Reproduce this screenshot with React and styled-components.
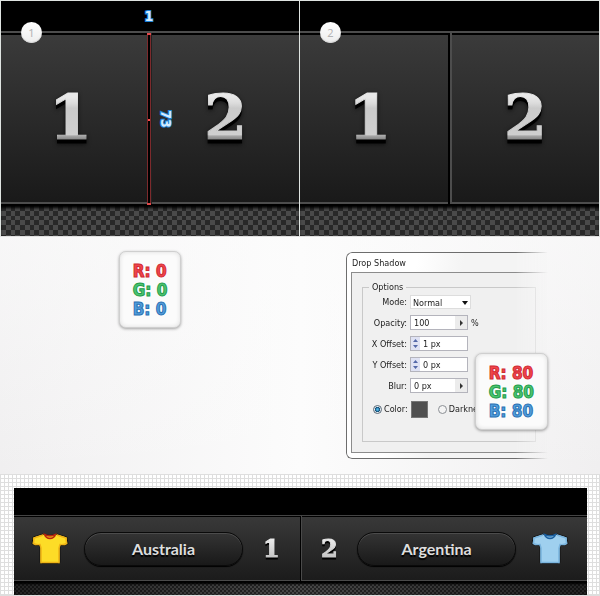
import React from "react";
import styled, { createGlobalStyle } from "styled-components";

const GlobalStyle = createGlobalStyle`
  * {
    box-sizing: border-box;
  }

  body {
    margin: 0;
    background: #fbfbfb;
    font-family: "Noto Sans", "Open Sans", sans-serif;
  }
`;

const Page = styled.main`
  display: flex;
  flex-direction: column;
`;

/* ---------- zoomed panels ---------- */

const Panels = styled.section`
  display: grid;
  grid-template-columns: 1fr 1fr;
  border-top: 1px solid #dfe4e1;
`;

const Panel = styled.article`
  position: relative;
  background: #000;
  border-right: 1px solid #dfe4e1;

  &:first-child {
    border-left: 1px solid #dfe4e1;
  }
`;

const StepBadge = styled.span`
  position: absolute;
  top: 21px;
  left: 20px;
  width: 21px;
  height: 21px;
  border-radius: 50%;
  background: linear-gradient(#fff, #ededed);
  box-shadow: inset 0 -1px 1px #d4d4d4;
  color: #b4b4b4;
  font-size: 11px;
  line-height: 21px;
  text-align: center;
`;

const Cells = styled.div`
  display: grid;
  grid-template-columns: 1fr 1fr;
  margin-top: 30px;
  border-top: 2px solid #4d4d4d;
  border-bottom: 2px solid #000;
`;

const Cell = styled.div`
  padding: 54px 0 55px;
  background: linear-gradient(#3b3b3b, #191919);
  box-shadow: inset 0 2px #000, inset 0 -2px #4d4d4d;

  &:first-child {
    padding-right: 8px;
    border-right: 2px solid #000;
  }

  &:last-child {
    border-left: 2px solid ${(props) => (props.$lit ? "#4d4d4d" : "#222")};
  }
`;

const Score = styled.div`
  font-family: "DejaVu Serif", serif;
  font-weight: bold;
  font-size: 62px;
  line-height: 1;
  text-align: center;
  color: transparent;
  -webkit-text-stroke: 1px transparent;
  background: linear-gradient(
    #e8e8e8 16%,
    #dcdcdc 26%,
    #cacaca 34%,
    #cfcfcf 77%,
    #a6a6a6 79%,
    #6c6c6c 89%
  );
  background-clip: text;
  filter: drop-shadow(0 4px 0 #000) drop-shadow(0 1px 2px rgba(0, 0, 0, 0.6));
`;

const SmallScore = styled(Score)`
  flex: 1;
  font-size: 24px;
  background: linear-gradient(#f0f0f0, #bdbdbd);
  background-clip: text;
  filter: drop-shadow(0 2px 0 #000);
`;

const Checker = styled.div`
  height: 30px;
  background-color: #282828;
  background-image: linear-gradient(
      90deg,
      #727272 5px,
      #000 5px 10px,
      #727272 10px 14px,
      #000 14px
    ),
    linear-gradient(#727272 5px, #000 5px 10px, #727272 10px 14px, #000 14px);
  background-size: 19px 19px;
  background-blend-mode: difference;
  box-shadow: inset 0 3px 3px -1px #000;
`;

const Measure = styled.div`
  position: absolute;
  top: 33px;
  bottom: 32px;
  left: calc(50% - 3px);
  width: 4px;
  border: solid #7d2a2c;
  border-width: 0 1px;

  &::before,
  &::after {
    content: "";
    position: absolute;
    left: -1px;
    width: 4px;
    height: 2px;
    background: #e2484a;
  }

  &::before {
    top: -1px;
  }

  &::after {
    bottom: -1px;
  }
`;

const MeasureDot = styled.i`
  position: absolute;
  top: 50%;
  left: 0;
  width: 2px;
  height: 2px;
  background: #ff4a4a;
`;

const Dimension = styled.span`
  position: absolute;
  color: #d5ebff;
  font-family: "DejaVu Sans Condensed", "DejaVu Sans", sans-serif;
  font-size: 14px;
  line-height: 18px;
  font-weight: bold;
  -webkit-text-stroke: 2px #1f83d8;
  paint-order: stroke fill;
`;

const WidthLabel = styled(Dimension)`
  top: 6px;
  left: calc(50% - 1px);
  transform: translateX(-50%);
`;

const HeightLabel = styled(Dimension)`
  top: 50%;
  left: calc(50% + 7px);
  transform: translateY(-50%);
  writing-mode: vertical-rl;
`;

/* ---------- settings ---------- */

const Settings = styled.section`
  display: grid;
  grid-template-columns: 1fr 1fr;
  padding: 14px 0 15px;
  border-top: 1px solid #e2e2e2;
  background: linear-gradient(rgba(252, 252, 252, 0.6), rgba(252, 252, 252, 0)),
    linear-gradient(90deg, #f0eff0, #fcfcfc 50%, #f0eff0);
`;

const Swatch = styled.div`
  padding: 10px 13px 8px;
  border: 1px solid #cfcfcf;
  border-radius: 7px;
  background: #fbfbfb;
  box-shadow: 0 1px 3px rgba(0, 0, 0, 0.35), inset 0 0 4px #ddd;
  font-family: "DejaVu Sans Condensed", "DejaVu Sans", sans-serif;
  font-size: 17px;
  line-height: 19px;
  font-weight: bold;
`;

const Channel = styled.div`
  white-space: nowrap;
  color: ${(props) => props.$fill};
  -webkit-text-stroke: 1px ${(props) => props.$edge};
`;

const LeftColumn = styled.div`
  display: flex;
  justify-content: center;
  align-items: flex-start;
`;

const RightColumn = styled.div`
  position: relative;
  padding: 1px 52px 0 46px;
`;

const Floating = styled.div`
  position: absolute;
  top: 102px;
  right: 52px;
`;

const Dialog = styled.form`
  padding: 0 0 5px 4px;
  border: 1px solid #6d6d6d;
  border-right: 0;
  border-radius: 6px 0 0 6px;
  background: linear-gradient(100deg, #fff 30%, #f4f4f4 50%);
  box-shadow: -1px 1px 3px rgba(0, 0, 0, 0.2);
  color: #222;
  font-family: "DejaVu Sans Condensed", "DejaVu Sans", sans-serif;
  font-size: 9px;
  line-height: 14px;
  mask-image: linear-gradient(90deg, #000 84%, transparent);
`;

const DialogTitle = styled.h2`
  margin: 0;
  padding: 3px 0 2px 1px;
  font-size: 9px;
  line-height: 14px;
  font-weight: normal;
`;

const DialogBody = styled.div`
  padding: 7px 12px 10px 10px;
  border: 1px solid #8c8c8c;
  border-right: 0;
  background: #f0f0f0;
`;

const Options = styled.fieldset`
  display: flex;
  flex-direction: column;
  gap: 6px;
  min-width: 0;
  margin: 0;
  padding: 0 0 23px;
  border: 1px solid #c9c9c9;

  legend {
    margin-left: 6px;
    padding: 0 3px;
  }
`;

const Row = styled.div`
  display: grid;
  grid-template-columns: 44px auto 1fr;
  column-gap: 3px;
  align-items: center;
  height: 15px;

  > label:first-child {
    text-align: right;
    white-space: nowrap;
  }
`;

const Select = styled.select`
  width: 61px;
  height: 14px;
  padding: 0 2px;
  border: 1px solid #ddd;
  border-radius: 0;
  appearance: none;
  background: #fff;
  font: inherit;
  color: inherit;
`;

const SelectWrap = styled.div`
  position: relative;
  display: flex;
`;

const Caret = styled.svg`
  position: absolute;
  top: 6px;
  right: 3px;
  pointer-events: none;
`;

const Field = styled.div`
  display: flex;
  width: 58px;
  height: 15px;
  border: 1px solid #b4b4bc;
  background: #fff;
`;

const Input = styled.input`
  flex: 1;
  min-width: 0;
  padding: 0 3px;
  border: 0;
  background: none;
  font: inherit;
  color: inherit;
`;

const FieldButton = styled.button`
  display: grid;
  place-items: center;
  width: ${(props) => (props.$spin ? 9 : 12)}px;
  padding: 0;
  border: 0;
  background: ${(props) => (props.$spin ? "#dfe2f3" : "#ececec")};
`;

const ColorRow = styled.div`
  display: flex;
  align-items: center;
  height: 18px;
  margin-top: 1px;
  padding-left: 10px;
  white-space: nowrap;
`;

const Radio = styled.input`
  appearance: none;
  flex: none;
  width: 9px;
  height: 9px;
  margin: 0 2px 0 0;
  border: 1px solid #8b8f94;
  border-radius: 50%;
  background: #f4f4f4;

  &:checked {
    border-color: #5b6a78;
    background: radial-gradient(#4fb4e6 15%, #145078 45%, #e8eef2 60%);
  }
`;

const ColorButton = styled.button`
  width: 17px;
  height: 17px;
  margin: 0 10px 0 3px;
  padding: 0;
  border: 1px solid #777;
  background: #505050;
`;

/* ---------- finished scoreboard ---------- */

const Preview = styled.section`
  padding: 13px 12px 0 13px;
  border: 1px solid #dedede;
  background-color: #fff;
  background-image: linear-gradient(90deg, transparent 3px, #dedede 3px),
    linear-gradient(transparent 3px, #dedede 3px);
  background-size: 4px 4px;
`;

const Board = styled.div`
  padding-top: 27px;
  background: #000;
`;

const Teams = styled.div`
  display: grid;
  grid-template-columns: 1fr 1fr;
  border-top: 1px solid #444;
  border-bottom: 1px solid #000;
`;

const Team = styled.div`
  display: flex;
  flex-direction: ${(props) => (props.$away ? "row-reverse" : "row")};
  align-items: center;
  padding: ${(props) => (props.$away ? "16px 18px 15px 0" : "16px 0 15px 17px")};
  border-${(props) => (props.$away ? "left" : "right")}: 1px solid
    ${(props) => (props.$away ? "#4a4a4a" : "#000")};
  background: linear-gradient(#393939, #1b1b1b);
  box-shadow: inset 0 1px #000, inset 0 -1px #4a4a4a;
`;

const TeamName = styled.div`
  flex: 0 1 159px;
  margin-${(props) => (props.$away ? "right" : "left")}: 15px;
  border: 1px solid #0a0a0a;
  border-radius: 17px;
  background: linear-gradient(#343434, #191919);
  box-shadow: inset 0 1px #4c4c4c, 0 1px 1px #000;
  color: #dedede;
  font-family: Lato, sans-serif;
  font-size: 16px;
  line-height: 32px;
  font-weight: bold;
  text-align: center;
  text-shadow: 0 2px 1px #000;
`;

const FineChecker = styled.div`
  height: 13px;
  background: linear-gradient(90deg, rgba(0, 0, 0, 0.5), transparent 50%, rgba(0, 0, 0, 0.5)),
    conic-gradient(#242424 25%, #484848 0 50%, #242424 0 75%, #484848 0) 0 0 / 4px 4px;
  box-shadow: inset 0 2px 2px #000;
`;

function Shirt({ fill, shade, collar }) {
  return (
    <svg width="38" height="34" viewBox="0 0 38 34" aria-hidden="true">
      <path
        d="M12 2 C9 3 5 4 2 5 L1 12 Q4 14 8 13.500 L9 14 V30 Q9 31.500 10.500 31.500 H27.500 Q29 31.500 29 30 V14 L30 13.500 Q34 14 37 12 L36 5 C33 4 29 3 26 2 Q19 5 12 2Z"
        fill={fill}
        stroke="#111"
        strokeWidth="1"
      />
      <path
        d="M12 3 C9 4 6 5 3 6 L2.500 11.500 Q5 13 9 12.500 L10 16 V30.500 H28 V16 L29 12.500 Q33 13 35.500 11.500 L35 6 C32 5 29 4 26 3"
        fill="none"
        stroke={shade}
        strokeWidth="1.500"
      />
      <path
        d="M13.500 2.500 Q19 5 24.500 2.500 Q23 6.500 19 6.500 Q15 6.500 13.500 2.500Z"
        fill={shade}
        stroke={collar}
        strokeWidth="1.500"
      />
    </svg>
  );
}

function Rgb({ value }) {
  return (
    <Swatch>
      <Channel $fill="#f2454b" $edge="#cf2a33">R: {value}</Channel>
      <Channel $fill="#4cc571" $edge="#239c4b">G: {value}</Channel>
      <Channel $fill="#529fdc" $edge="#2a70b3">B: {value}</Channel>
    </Swatch>
  );
}

function Flyout() {
  return (
    <FieldButton type="button" aria-label="Open slider">
      <svg width="3" height="6">
        <path d="M0 0 L3 3 L0 6Z" fill="#333" />
      </svg>
    </FieldButton>
  );
}

function Spinner() {
  return (
    <FieldButton type="button" $spin aria-label="Step value">
      <svg width="5" height="9">
        <path d="M0 3 L2.500 0 L5 3Z M0 6 L2.500 9 L5 6Z" fill="#5468a8" />
      </svg>
    </FieldButton>
  );
}

function DropShadowDialog() {
  return (
    <Dialog>
      <DialogTitle>Drop Shadow</DialogTitle>
      <DialogBody>
        <Options>
          <legend>Options</legend>
          <Row>
            <label htmlFor="mode">Mode:</label>
            <SelectWrap>
              <Select id="mode" defaultValue="Normal">
                <option>Normal</option>
              </Select>
              <Caret width="6" height="4">
                <path d="M0 0 H6 L3 4Z" fill="#111" />
              </Caret>
            </SelectWrap>
          </Row>
          <Row>
            <label htmlFor="opacity">Opacity:</label>
            <Field>
              <Input id="opacity" defaultValue="100" />
              <Flyout />
            </Field>
            <span>%</span>
          </Row>
          <Row>
            <label htmlFor="x-offset">X Offset:</label>
            <Field>
              <Spinner />
              <Input id="x-offset" defaultValue="1 px" />
            </Field>
          </Row>
          <Row>
            <label htmlFor="y-offset">Y Offset:</label>
            <Field>
              <Spinner />
              <Input id="y-offset" defaultValue="0 px" />
            </Field>
          </Row>
          <Row>
            <label htmlFor="blur">Blur:</label>
            <Field>
              <Input id="blur" defaultValue="0 px" />
              <Flyout />
            </Field>
          </Row>
          <ColorRow>
            <Radio type="radio" name="fill" id="fill-color" defaultChecked />
            <label htmlFor="fill-color">Color:</label>
            <ColorButton type="button" aria-label="Pick color" />
            <Radio type="radio" name="fill" id="fill-darkness" />
            <label htmlFor="fill-darkness">Darkne</label>
          </ColorRow>
        </Options>
      </DialogBody>
    </Dialog>
  );
}

function App() {
  return (
    <>
      <GlobalStyle />
      <Page>
        <Panels>
          <Panel>
            <Cells>
              <Cell><Score>1</Score></Cell>
              <Cell><Score>2</Score></Cell>
            </Cells>
            <Checker />
            <Measure><MeasureDot /></Measure>
            <WidthLabel>1</WidthLabel>
            <HeightLabel>73</HeightLabel>
            <StepBadge>1</StepBadge>
          </Panel>
          <Panel>
            <Cells>
              <Cell><Score>1</Score></Cell>
              <Cell $lit><Score>2</Score></Cell>
            </Cells>
            <Checker />
            <StepBadge>2</StepBadge>
          </Panel>
        </Panels>

        <Settings>
          <LeftColumn>
            <Rgb value={0} />
          </LeftColumn>
          <RightColumn>
            <DropShadowDialog />
            <Floating>
              <Rgb value={80} />
            </Floating>
          </RightColumn>
        </Settings>

        <Preview>
          <Board>
            <Teams>
              <Team>
                <Shirt fill="#fddc27" shade="#eeb217" collar="#b8260f" />
                <TeamName>Australia</TeamName>
                <SmallScore>1</SmallScore>
              </Team>
              <Team $away>
                <Shirt fill="#9fd0ef" shade="#7ab4de" collar="#1c5f9e" />
                <TeamName $away>Argentina</TeamName>
                <SmallScore>2</SmallScore>
              </Team>
            </Teams>
            <FineChecker />
          </Board>
        </Preview>
      </Page>
    </>
  );
}

export default App;
